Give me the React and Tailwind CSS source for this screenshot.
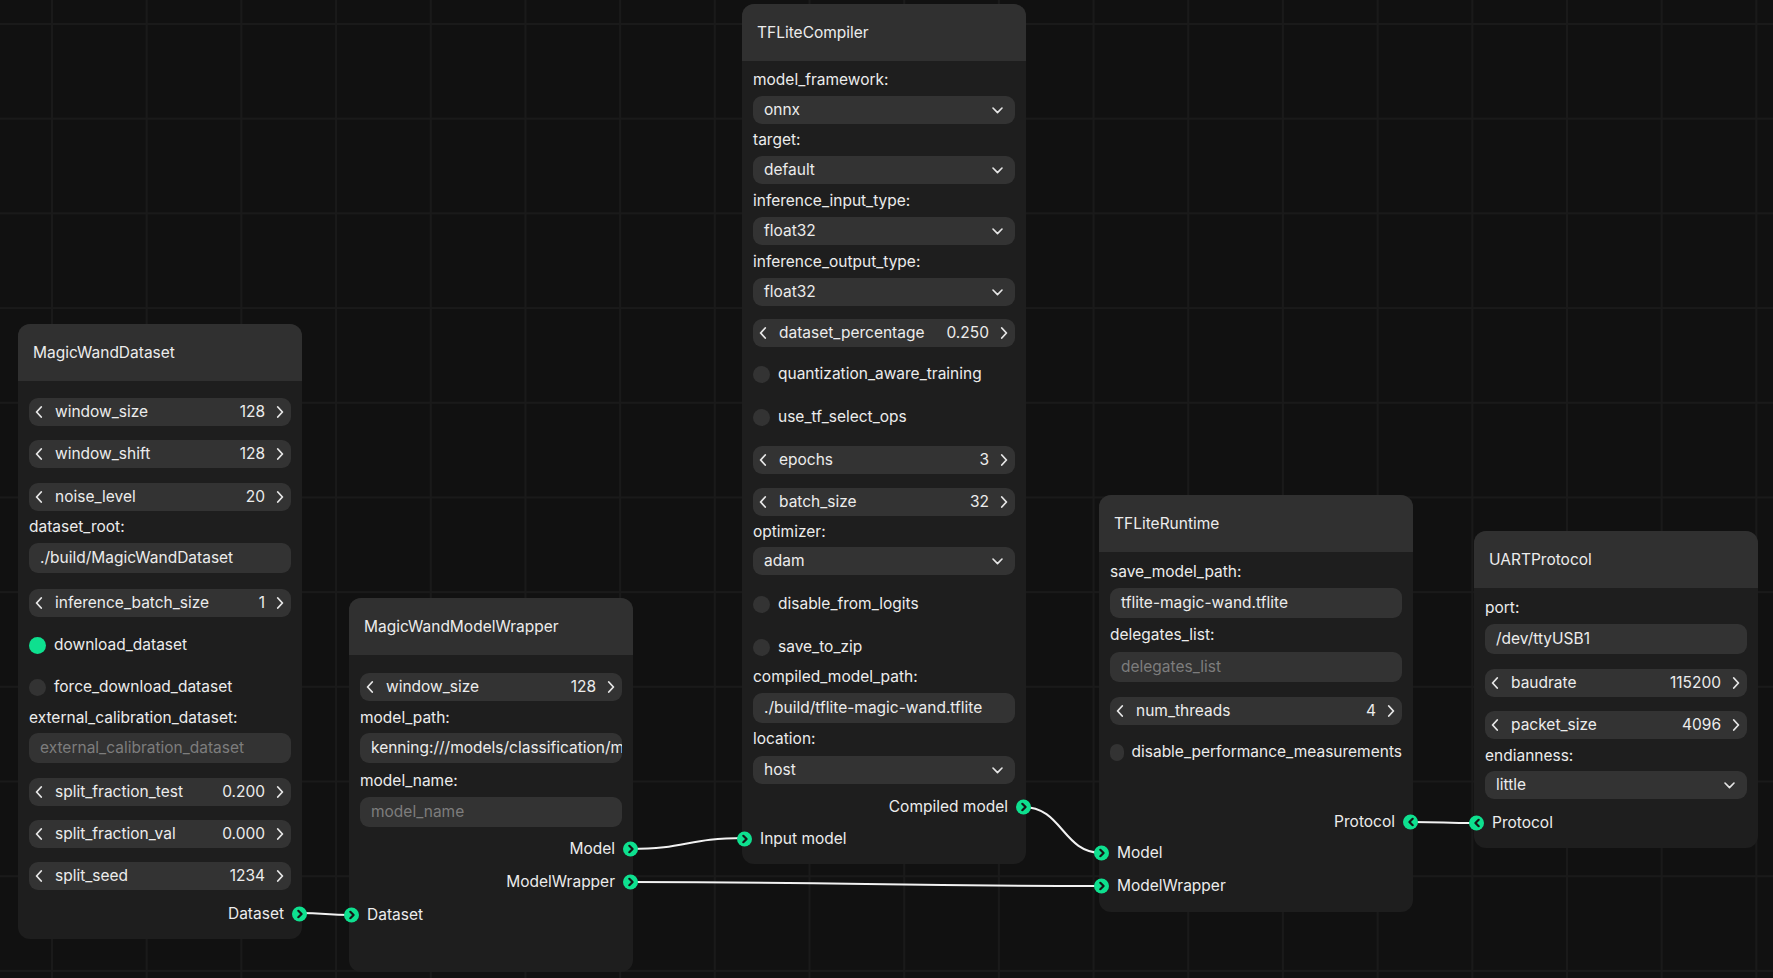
import React from "react";

const FONT = "font-['Inter','Liberation_Sans',sans-serif]";

const ChevronLeft = () => (
  <svg width="8" height="12" viewBox="0 0 8 12" fill="none">
    <path d="M6.2 1 L1.6 6 L6.2 11" stroke="#e6e6e6" strokeWidth="1.8" strokeLinecap="round" strokeLinejoin="round" />
  </svg>
);

const ChevronRight = () => (
  <svg width="8" height="12" viewBox="0 0 8 12" fill="none">
    <path d="M1.8 1 L6.4 6 L1.8 11" stroke="#e6e6e6" strokeWidth="1.8" strokeLinecap="round" strokeLinejoin="round" />
  </svg>
);

const ChevronDown = () => (
  <svg width="11" height="7" viewBox="0 0 11 7" fill="none">
    <path d="M1 1 L5.5 5.6 L10 1" stroke="#e6e6e6" strokeWidth="1.6" strokeLinecap="round" strokeLinejoin="round" />
  </svg>
);

// green socket with a dark arrow inside
const Socket = ({ dir = "right", className }) => (
  <span className={`absolute top-1/2 -translate-y-1/2 w-[15px] h-[15px] rounded-full bg-[#0ee08f] flex items-center justify-center ${className}`}>
    <svg width="8" height="9" viewBox="0 0 8 9" fill="none">
      {dir === "right" ? (
        <path d="M2.3 1.2 L5.6 4.5 L2.3 7.8" stroke="#151515" strokeWidth="2.2" strokeLinecap="round" strokeLinejoin="round" />
      ) : (
        <path d="M5.7 1.2 L2.4 4.5 L5.7 7.8" stroke="#151515" strokeWidth="2.2" strokeLinecap="round" strokeLinejoin="round" />
      )}
    </svg>
  </span>
);

const NumberRow = ({ label, value, mt }) => (
  <div className={`${mt} h-[28px] rounded-[9px] bg-[#333333] flex items-center pl-[5px] pr-[6px]`}>
    <span className="w-[10px] flex justify-center"><ChevronLeft /></span>
    <span className="ml-[11px] flex-1 text-[#ececec]">{label}</span>
    <span className="text-[#ececec] mr-[10px]">{value}</span>
    <span className="w-[10px] flex justify-center"><ChevronRight /></span>
  </div>
);

const Label = ({ text, mt }) => (
  <div className={`${mt} h-[20px] leading-[20px] text-[#ececec]`}>{text}</div>
);

const TextInput = ({ value, placeholder, mt }) => (
  <div className={`${mt} h-[30px] rounded-[9px] bg-[#333333] flex items-center px-[11px] overflow-hidden whitespace-nowrap`}>
    {value ? (
      <span className="text-[#ececec]">{value}</span>
    ) : (
      <span className="text-[#7d7d7d]">{placeholder}</span>
    )}
  </div>
);

const Select = ({ value, mt }) => (
  <div className={`${mt} h-[28px] rounded-[9px] bg-[#333333] flex items-center justify-between pl-[11px] pr-[12px]`}>
    <span className="text-[#ececec]">{value}</span>
    <ChevronDown />
  </div>
);

const Checkbox = ({ label, checked, mt }) => (
  <div className={`${mt} h-[28px] flex items-center`}>
    <span className={`w-[17px] h-[17px] rounded-full ${checked ? "bg-[#0ee08f]" : "bg-[#333333]"}`} />
    <span className="ml-[8px] text-[#ececec] whitespace-nowrap">{label}</span>
  </div>
);

const Output = ({ label, mt, dir = "right" }) => (
  <div className={`${mt} relative -mx-[11px] h-[20px] flex items-center justify-end pr-[18px] text-[#ececec]`}>
    {label}
    <Socket dir={dir} className="right-[-5px]" />
  </div>
);

const Input = ({ label, mt, dir = "right" }) => (
  <div className={`${mt} relative -mx-[11px] h-[20px] flex items-center pl-[18px] text-[#ececec]`}>
    <Socket dir={dir} className="left-[-5px]" />
    {label}
  </div>
);

const Node = ({ title, className, bodyClass, children }) => (
  <div className={`absolute rounded-[12px] bg-[#1e1e1e] ${className}`}>
    <div className="h-[57px] rounded-t-[12px] bg-[#303030] flex items-center px-[15px] text-[#ececec]">{title}</div>
    <div className={`flex flex-col px-[11px] ${bodyClass}`}>{children}</div>
  </div>
);

const edge = (x1, y1, x2, y2) => {
  const k = Math.max(Math.abs(x2 - x1) / 2, 20);
  return `M${x1} ${y1} C${x1 + k} ${y1}, ${x2 - k} ${y2}, ${x2} ${y2}`;
};

const Edges = () => (
  <svg className="absolute inset-0" width="1773" height="978">
    <g stroke="#f2f2f2" strokeWidth="2" fill="none">
      <path d={edge(300, 913, 351, 915)} />
      <path d={edge(630, 849, 744, 838)} />
      <path d={edge(630, 882, 1102, 886)} />
      <path d={edge(1023, 807, 1102, 853)} />
      <path d={edge(1412, 822, 1475, 823)} />
    </g>
  </svg>
);

export default function App() {
  return (
    <div
      className={`relative w-[1773px] h-[978px] overflow-hidden bg-[#111111] bg-[linear-gradient(to_right,#1a1a1a_2px,transparent_2px),linear-gradient(to_bottom,#1a1a1a_2px,transparent_2px)] bg-size-[94.7px_94.7px] bg-position-[51px_23px] text-[15.5px] ${FONT}`}
    >
      <Edges />

      <Node title="MagicWandDataset" className="left-[18px] top-[324px] w-[284px]" bodyClass="pb-[15px]">
        <NumberRow label="window_size" value="128" mt="mt-[17px]" />
        <NumberRow label="window_shift" value="128" mt="mt-[14px]" />
        <NumberRow label="noise_level" value="20" mt="mt-[15px]" />
        <Label text="dataset_root:" mt="mt-[6px]" />
        <TextInput value="./build/MagicWandDataset" mt="mt-[6px]" />
        <NumberRow label="inference_batch_size" value="1" mt="mt-[16px]" />
        <Checkbox label="download_dataset" checked mt="mt-[14px]" />
        <Checkbox label="force_download_dataset" mt="mt-[14px]" />
        <Label text="external_calibration_dataset:" mt="mt-[7px]" />
        <TextInput placeholder="external_calibration_dataset" mt="mt-[5px]" />
        <NumberRow label="split_fraction_test" value="0.200" mt="mt-[15px]" />
        <NumberRow label="split_fraction_val" value="0.000" mt="mt-[14px]" />
        <NumberRow label="split_seed" value="1234" mt="mt-[14px]" />
        <Output label="Dataset" mt="mt-[14px]" />
      </Node>

      <Node title="MagicWandModelWrapper" className="left-[349px] top-[598px] w-[284px]" bodyClass="pb-[47px]">
        <NumberRow label="window_size" value="128" mt="mt-[18px]" />
        <Label text="model_path:" mt="mt-[7px]" />
        <TextInput value="kenning:///models/classification/magic_wand.h5" mt="mt-[5px]" />
        <Label text="model_name:" mt="mt-[8px]" />
        <TextInput placeholder="model_name" mt="mt-[6px]" />
        <Output label="Model" mt="mt-[12px]" />
        <Output label="ModelWrapper" mt="mt-[13px]" />
        <Input label="Dataset" mt="mt-[13px]" />
      </Node>

      <Node title="TFLiteCompiler" className="left-[742px] top-[4px] w-[284px]" bodyClass="pb-[15px]">
        <Label text="model_framework:" mt="mt-[9px]" />
        <Select value="onnx" mt="mt-[6px]" />
        <Label text="target:" mt="mt-[6px]" />
        <Select value="default" mt="mt-[6px]" />
        <Label text="inference_input_type:" mt="mt-[7px]" />
        <Select value="float32" mt="mt-[6px]" />
        <Label text="inference_output_type:" mt="mt-[7px]" />
        <Select value="float32" mt="mt-[6px]" />
        <NumberRow label="dataset_percentage" value="0.250" mt="mt-[13px]" />
        <Checkbox label="quantization_aware_training" mt="mt-[13px]" />
        <Checkbox label="use_tf_select_ops" mt="mt-[15px]" />
        <NumberRow label="epochs" value="3" mt="mt-[15px]" />
        <NumberRow label="batch_size" value="32" mt="mt-[14px]" />
        <Label text="optimizer:" mt="mt-[6px]" />
        <Select value="adam" mt="mt-[5px]" />
        <Checkbox label="disable_from_logits" mt="mt-[15px]" />
        <Checkbox label="save_to_zip" mt="mt-[15px]" />
        <Label text="compiled_model_path:" mt="mt-[6px]" />
        <TextInput value="./build/tflite-magic-wand.tflite" mt="mt-[6px]" />
        <Label text="location:" mt="mt-[6px]" />
        <Select value="host" mt="mt-[7px]" />
        <Output label="Compiled model" mt="mt-[13px]" />
        <Input label="Input model" mt="mt-[12px]" />
      </Node>

      <Node title="TFLiteRuntime" className="left-[1099px] top-[495px] w-[314px]" bodyClass="pb-[16px]">
        <Label text="save_model_path:" mt="mt-[10px]" />
        <TextInput value="tflite-magic-wand.tflite" mt="mt-[6px]" />
        <Label text="delegates_list:" mt="mt-[7px]" />
        <TextInput placeholder="delegates_list" mt="mt-[7px]" />
        <NumberRow label="num_threads" value="4" mt="mt-[15px]" />
        <Checkbox label="disable_performance_measurements" mt="mt-[13px]" />
        <Output label="Protocol" dir="left" mt="mt-[46px]" />
        <Input label="Model" mt="mt-[11px]" />
        <Input label="ModelWrapper" mt="mt-[13px]" />
      </Node>

      <Node title="UARTProtocol" className="left-[1474px] top-[531px] w-[284px]" bodyClass="pb-[15px]">
        <Label text="port:" mt="mt-[10px]" />
        <TextInput value="/dev/ttyUSB1" mt="mt-[6px]" />
        <NumberRow label="baudrate" value="115200" mt="mt-[15px]" />
        <NumberRow label="packet_size" value="4096" mt="mt-[14px]" />
        <Label text="endianness:" mt="mt-[7px]" />
        <Select value="little" mt="mt-[5px]" />
        <Input label="Protocol" dir="left" mt="mt-[14px]" />
      </Node>
    </div>
  );
}
